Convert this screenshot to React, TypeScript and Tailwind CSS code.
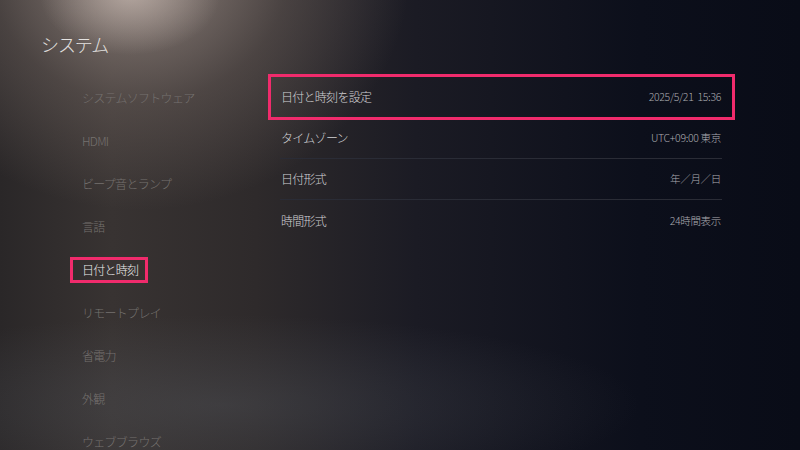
const menu = [
  "システムソフトウェア",
  "HDMI",
  "ビープ音とランプ",
  "言語",
  "日付と時刻",
  "リモートプレイ",
  "省電力",
  "外観",
  "ウェブブラウズ",
];

const rows = [
  { label: "日付と時刻を設定", value: "2025/5/21  15:36" },
  { label: "タイムゾーン", value: "UTC+09:00 東京" },
  { label: "日付形式", value: "年／月／日" },
  { label: "時間形式", value: "24時間表示" },
];

const App = () => {
  return (
    <div className="relative w-[800px] h-[450px] overflow-hidden font-light font-['Noto_Sans_CJK_JP','Noto_Sans',sans-serif] bg-[radial-gradient(ellipse_90px_60px_at_130px_-5px,rgba(215,200,192,0.55),transparent),radial-gradient(ellipse_270px_240px_at_140px_-30px,rgba(180,164,156,0.7),rgba(130,116,110,0.35)_55%,transparent_100%),radial-gradient(ellipse_420px_90px_at_220px_405px,rgba(95,100,108,0.3),transparent),linear-gradient(90deg,#2a2728_0%,#383332_14%,#2e2a2b_32%,#1b1b24_52%,#0c0f1b_80%,#090c17_100%)]">
      <div className="flex h-full">
        {/* left column */}
        <div className="w-[280px] shrink-0">
          <div className="pl-[41px] pt-[31px] h-[76px] text-[18px] leading-[26px] tracking-[-0.06em] text-[#e4e2e0]">
            システム
          </div>
          <div className="flex flex-col pl-[82px]">
            {menu.map((m) => (
              <div key={m} className="h-[43px] flex items-center">
                {m === "日付と時刻" ? (
                  <div className="-ml-[12px] h-[26px] flex items-center border-[3px] border-[#f02b6c] pl-[9px] pr-[7px] text-[12px] tracking-[-0.06em] text-[#ececec]">
                    {m}
                  </div>
                ) : (
                  <div className="text-[12px] tracking-[-0.06em] text-[#75716f]">{m}</div>
                )}
              </div>
            ))}
          </div>
        </div>

        {/* right column */}
        <div className="w-[442px] pt-[77px]">
          {rows.map((r, i) => (
            <div
              key={r.label}
              className={`relative h-[41px] flex items-center justify-between pl-[1px] pr-[1px] ${
                i < rows.length - 1 ? "border-b border-[#2a2c36]" : ""
              }`}
            >
              <span className="text-[12px] tracking-[-0.06em] text-[#d2d2d5]">{r.label}</span>
              <span className="text-[10.5px] tracking-[-0.03em] whitespace-pre text-[#acacb1]">{r.value}</span>
              {i === 0 && (
                <div className="absolute -left-[12px] -right-[13px] -top-[3px] bottom-[-3px] border-[3px] border-[#f02b6c]" />
              )}
            </div>
          ))}
        </div>
      </div>
    </div>
  );
};

export default App;
